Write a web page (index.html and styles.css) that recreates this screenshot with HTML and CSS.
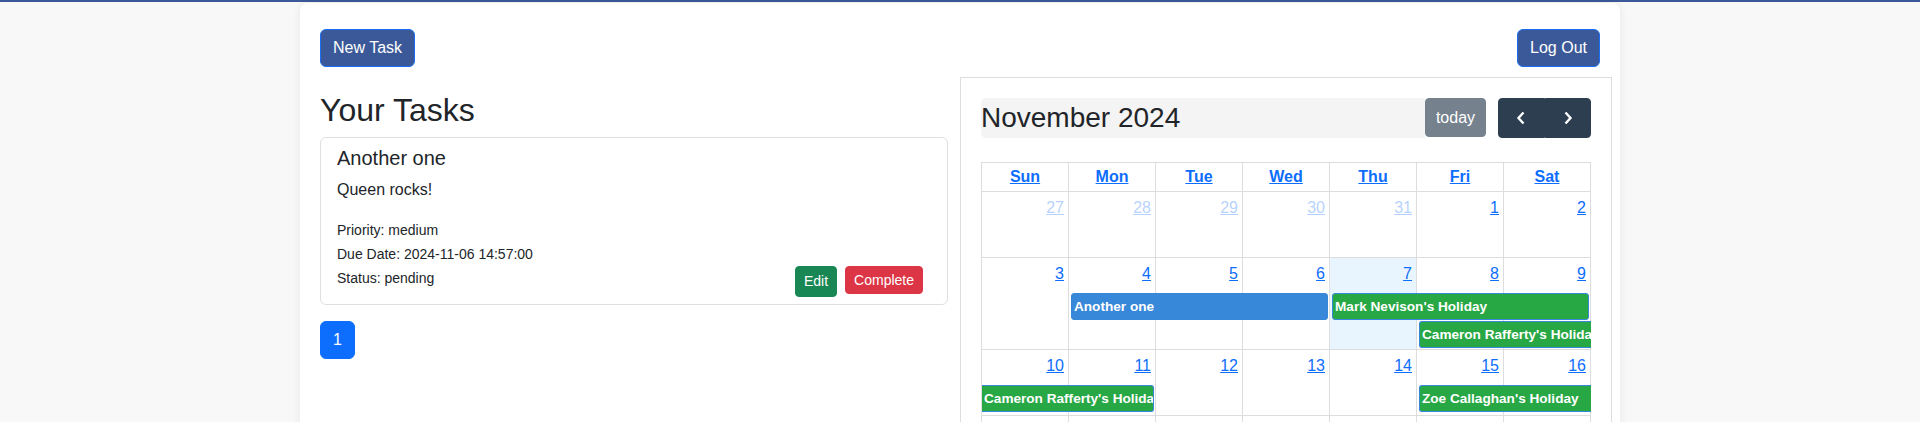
FILE: index.html
```html
<!DOCTYPE html>
<html lang="en">
<head>
<meta charset="utf-8">
<title>Tasks</title>
<link rel="stylesheet" href="styles.css">
</head>
<body>
<div class="topline"></div>
<div class="page">
  <header class="header">
    <button class="btn btn-brand">New Task</button>
    <button class="btn btn-brand">Log Out</button>
  </header>
  <div class="main">
    <section class="tasks">
      <h2 class="tasks-title">Your Tasks</h2>
      <div class="task-card">
        <h5 class="task-name">Another one</h5>
        <p class="task-desc">Queen rocks!</p>
        <div class="task-meta">
          <div class="meta-line">Priority: medium</div>
          <div class="meta-line">Due Date: 2024-11-06 14:57:00</div>
          <div class="meta-line meta-last">
            <span>Status: pending</span>
            <div class="task-actions">
              <a class="btn-sm btn-edit">Edit</a>
              <button class="btn-sm btn-complete">Complete</button>
            </div>
          </div>
        </div>
      </div>
      <nav class="pager"><a class="page-link">1</a></nav>
    </section>

    <section class="calendar">
      <div class="cal-toolbar">
        <h2 class="cal-title">November 2024</h2>
        <button class="cal-btn cal-today">today</button>
        <div class="cal-nav">
          <button class="cal-btn cal-prev"><svg width="10" height="14" viewBox="0 0 10 14"><polyline points="7.5,1.5 2.5,7 7.5,12.5" fill="none" stroke="#fff" stroke-width="2.4"/></svg></button>
          <button class="cal-btn cal-next"><svg width="10" height="14" viewBox="0 0 10 14"><polyline points="2.5,1.5 7.5,7 2.5,12.5" fill="none" stroke="#fff" stroke-width="2.4"/></svg></button>
        </div>
      </div>
      <div class="cal-grid">
        <div class="cal-head">
          <div class="head-cell"><a>Sun</a></div>
          <div class="head-cell"><a>Mon</a></div>
          <div class="head-cell"><a>Tue</a></div>
          <div class="head-cell"><a>Wed</a></div>
          <div class="head-cell"><a>Thu</a></div>
          <div class="head-cell"><a>Fri</a></div>
          <div class="head-cell"><a>Sat</a></div>
        </div>
        <div class="week">
          <div class="day c1 other"><a>27</a></div>
          <div class="day c2 other"><a>28</a></div>
          <div class="day c3 other"><a>29</a></div>
          <div class="day c4 other"><a>30</a></div>
          <div class="day c5 other"><a>31</a></div>
          <div class="day c6"><a>1</a></div>
          <div class="day c7"><a>2</a></div>
        </div>
        <div class="week">
          <div class="day c1"><a>3</a></div>
          <div class="day c2"><a>4</a></div>
          <div class="day c3"><a>5</a></div>
          <div class="day c4"><a>6</a></div>
          <div class="day c5 today"><a>7</a></div>
          <div class="day c6"><a>8</a></div>
          <div class="day c7"><a>9</a></div>
          <div class="event ev-blue r1 span-2-5">Another one</div>
          <div class="event ev-green r1 span-5-8">Mark Nevison's Holiday</div>
          <div class="event ev-green r2 span-6-8 cont-right">Cameron Rafferty's Holiday</div>
        </div>
        <div class="week">
          <div class="day c1"><a>10</a></div>
          <div class="day c2"><a>11</a></div>
          <div class="day c3"><a>12</a></div>
          <div class="day c4"><a>13</a></div>
          <div class="day c5"><a>14</a></div>
          <div class="day c6"><a>15</a></div>
          <div class="day c7"><a>16</a></div>
          <div class="event ev-green r1 span-1-3 cont-left">Cameron Rafferty's Holiday</div>
          <div class="event ev-green r1 span-6-8 cont-right">Zoe Callaghan's Holiday</div>
        </div>
        <div class="week">
          <div class="day c1"><a>17</a></div>
          <div class="day c2"><a>18</a></div>
          <div class="day c3"><a>19</a></div>
          <div class="day c4"><a>20</a></div>
          <div class="day c5"><a>21</a></div>
          <div class="day c6"><a>22</a></div>
          <div class="day c7"><a>23</a></div>
        </div>
      </div>
    </section>
  </div>
</div>
</body>
</html>
```

FILE: styles.css
```css
html, body {
  margin: 0;
  padding: 0;
  overflow: hidden;
}
body {
  background: #f8f8f8;
  font-family: "Liberation Sans", Arial, sans-serif;
  font-size: 16px;
  line-height: 1.5;
  color: #212529;
}
.topline {
  height: 2px;
  background: #3b5998;
}
.page {
  width: 1320px;
  box-sizing: border-box;
  margin: 1px auto 0;
  padding: 26px 20px 0;
  min-height: 700px;
  background: #fff;
  border-radius: 8px 8px 0 0;
  box-shadow: 0 0 10px rgba(0, 0, 0, 0.07);
}
.header {
  display: flex;
  justify-content: space-between;
}
.btn {
  font-family: inherit;
  font-size: 16px;
  line-height: 24px;
  padding: 6px 12px;
  border-radius: 6px;
  cursor: pointer;
}
.btn-brand {
  background: #3b5998;
  border: 1px solid #1a6ef2;
  color: #fff;
}
.main {
  display: flex;
  margin: 10px -12px 0;
}
.tasks {
  flex: 0 0 652px;
  box-sizing: border-box;
  padding: 0 12px;
}
.tasks-title {
  font-size: 32px;
  font-weight: 400;
  line-height: 1.2;
  margin: 14px 0 8px;
}
.task-card {
  border: 1px solid #dfdfdf;
  border-radius: 6px;
  padding: 8px 16px 7px;
}
.task-name {
  font-size: 20px;
  font-weight: 400;
  line-height: 24px;
  margin: 0 0 8px;
}
.task-desc {
  margin: 0 0 16px;
  line-height: 24px;
}
.meta-line {
  font-size: 14px;
  line-height: 24px;
}
.meta-last {
  display: flex;
  align-items: flex-start;
}
.task-actions {
  margin-left: auto;
  display: flex;
  align-items: flex-start;
}
.btn-sm {
  font-family: inherit;
  font-size: 14px;
  color: #fff;
  padding: 4px 8px;
  border-radius: 4px;
  margin-right: 8px;
  cursor: pointer;
}
.btn-edit {
  display: block;
  line-height: 21px;
  background: #198754;
  border: 1px solid #198754;
}
.btn-complete {
  line-height: 18px;
  background: #dc3545;
  border: 1px solid #dc3545;
}
.pager {
  margin-top: 16px;
  display: flex;
}
.page-link {
  display: block;
  padding: 6px 12px;
  line-height: 24px;
  background: #0d6efd;
  border: 1px solid #0d6efd;
  color: #fff;
  border-radius: 6px;
}

/* Calendar */
.calendar {
  flex: 0 0 652px;
  box-sizing: border-box;
  border: 1px solid #ddd;
  padding: 20px;
}
.cal-toolbar {
  display: flex;
  align-items: stretch;
  height: 40px;
  margin-bottom: 24px;
}
.cal-title {
  flex: 1;
  margin: 0;
  background: #f4f4f4;
  border-radius: 5px 0 0 5px;
  font-size: 28px;
  font-weight: 400;
  line-height: 1.2;
  display: flex;
  align-items: center;
  color: #212529;
}
.cal-btn {
  font-family: inherit;
  font-size: 16px;
  line-height: 24px;
  background: #2c3e50;
  border: 1px solid #2c3e50;
  color: #fff;
  padding: 0;
  cursor: pointer;
}
.cal-today {
  opacity: 0.65;
  width: 61px;
  height: 39px;
  border-radius: 4px;
}
.cal-nav {
  display: flex;
  margin-left: 12px;
}
.cal-prev, .cal-next {
  width: 46.5px;
  display: flex;
  align-items: center;
  justify-content: center;
}
.cal-prev {
  border-radius: 4px 0 0 4px;
}
.cal-next {
  border-radius: 0 4px 4px 0;
}
.cal-grid {
  border-top: 1px solid #ddd;
  border-left: 1px solid #ddd;
}
.cal-head {
  display: grid;
  grid-template-columns: repeat(7, 1fr);
}
.head-cell {
  border-right: 1px solid #ddd;
  border-bottom: 1px solid #ddd;
  padding: 2px 4px;
  text-align: center;
  font-weight: 700;
  line-height: 24px;
}
.head-cell a, .day a {
  color: #0d6efd;
  text-decoration: underline;
}
.week {
  display: grid;
  grid-template-columns: repeat(7, 1fr);
  grid-template-rows: 35px auto auto minmax(1px, 1fr);
  min-height: 66px;
}
.day {
  grid-row: 1 / -1;
  border-right: 1px solid #ddd;
  border-bottom: 1px solid #ddd;
  text-align: right;
  padding: 4px;
  line-height: 24px;
  background: #fff;
}
.day.other a {
  opacity: 0.3;
}
.day.today {
  background: #e8f5fe;
}
.c1 { grid-column: 1; }
.c2 { grid-column: 2; }
.c3 { grid-column: 3; }
.c4 { grid-column: 4; }
.c5 { grid-column: 5; }
.c6 { grid-column: 6; }
.c7 { grid-column: 7; }
.r1 { grid-row: 2; }
.r2 { grid-row: 3; }
.span-1-3 { grid-column: 1 / 3; }
.span-2-5 { grid-column: 2 / 5; }
.span-5-8 { grid-column: 5 / 8; }
.span-6-8 { grid-column: 6 / 8; }
.event {
  margin: 0 2px 1px;
  border: 1px solid #3788d8;
  border-radius: 3px;
  padding: 2px 2px;
  font-size: 13.6px;
  font-weight: 700;
  line-height: 21px;
  color: #fff;
  white-space: nowrap;
  overflow: hidden;
}
.ev-blue { background: #3788d8; }
.ev-green { background: #28a745; }
.cont-right {
  margin-right: 0;
  border-right-width: 0;
  border-top-right-radius: 0;
  border-bottom-right-radius: 0;
}
.cont-left {
  margin-left: 0;
  border-left-width: 0;
  border-top-left-radius: 0;
  border-bottom-left-radius: 0;
}
```
